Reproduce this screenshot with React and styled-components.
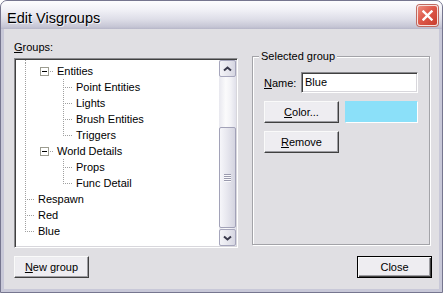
import React from 'react';
import styled, { createGlobalStyle } from 'styled-components';

const GlobalStyle = createGlobalStyle`
  html, body {
    margin: 0;
    padding: 0;
    background: #ffffff;
  }
  body {
    font-family: "Liberation Sans", Arial, sans-serif;
    font-size: 11px;
    color: #000;
  }
`;

const Window = styled.div`
  width: 443px;
  height: 293px;
  box-sizing: border-box;
  border: 1px solid #76768f;
  border-radius: 7px 7px 0 0;
  background: #c8c8d8;
  display: flex;
  flex-direction: column;
  overflow: hidden;
`;

const TitleBar = styled.div`
  height: 28px;
  flex: none;
  display: flex;
  justify-content: space-between;
  padding: 0 4px 0 6px;
  background: linear-gradient(#fdfdfe 0%, #f2f2f7 30%, #dedee8 65%, #c6c6d5 92%, #b6b6c8 100%);
`;

const Title = styled.span`
  font-family: "Liberation Sans", Arial, sans-serif;
  font-size: 14.5px;
  line-height: 16px;
  padding-top: 9px;
  color: #000;
  text-shadow: 1px 1px 0 rgba(255, 255, 255, 0.7);
`;

const CloseBox = styled.div`
  width: 21px;
  height: 21px;
  margin-top: 4px;
  box-sizing: border-box;
  border: 1px solid #f6e2de;
  border-radius: 3px;
  background: linear-gradient(135deg, #ec8e80 0%, #de5a4b 45%, #c83c2d 100%);
  box-shadow: 0 0 0 1px #bf6a60;
  display: flex;
  align-items: center;
  justify-content: center;
`;

const Client = styled.div`
  flex: 1;
  margin: 0 3px 3px;
  background: #e0dfe3;
  padding: 12px 7px 11px 10px;
  display: flex;
  flex-direction: column;
`;

const TopRow = styled.div`
  display: flex;
  align-items: flex-start;
`;

const LeftCol = styled.div`
  width: 224px;
  display: flex;
  flex-direction: column;
`;

const Label = styled.div`
  line-height: 13px;
  margin-bottom: 4px;
`;

const TreeBox = styled.div`
  height: 190px;
  box-sizing: border-box;
  border: 1px solid;
  border-color: #8a8a8e #ffffff #ffffff #8a8a8e;
  box-shadow: inset 1px 1px 0 #404040, inset -1px -1px 0 #d8d7dc;
  padding: 1px;
  display: flex;
  background: #ffffff;
`;

const TreeList = styled.div`
  flex: 1;
  overflow: hidden;
  background: #ffffff;
`;

const Row = styled.div`
  display: flex;
  height: ${(p) => p.$h || 16}px;
  line-height: 16px;
  white-space: nowrap;
`;

const Cell = styled.svg`
  flex: none;
  display: block;
`;

const ItemText = styled.span`
  margin-left: 3px;
`;

const ScrollBar = styled.div`
  width: 17px;
  flex: none;
  display: flex;
  flex-direction: column;
  background: linear-gradient(to right, #e8e8ef, #fbfbfc 40%, #f2f2f6 70%, #e0e0ea);
`;

const ArrowButton = styled.div`
  height: 17px;
  flex: none;
  box-sizing: border-box;
  border: 1px solid #a6a6bc;
  border-radius: 2px;
  background: linear-gradient(to right, #f4f4f8, #e4e4ec 60%, #d6d6e2);
  display: flex;
  align-items: center;
  justify-content: center;
`;

const Track = styled.div`
  flex: 1;
  padding: ${(p) => p.$offset}px 0 1px;
`;

const Thumb = styled.div`
  height: ${(p) => p.$size}px;
  box-sizing: border-box;
  border: 1px solid #a2a2b8;
  border-radius: 2px;
  background: linear-gradient(to right, #f6f6fa, #e6e6ee 50%, #d4d4e0);
  display: flex;
  flex-direction: column;
  align-items: center;
  justify-content: center;
  gap: 1px;
`;

const Grip = styled.div`
  width: 7px;
  height: 1px;
  background: #9a9aae;
  box-shadow: 0 1px 0 #fafafc;
`;

const GroupBox = styled.fieldset`
  margin: 9px 2px 0 14px;
  padding: 0;
  width: 178px;
  height: 195px;
  box-sizing: border-box;
  border: 1px solid #a3a3a8;
  box-shadow: inset 1px 1px 0 #ffffff, 1px 1px 0 #ffffff;
  min-width: 0;
`;

const Legend = styled.legend`
  margin-left: 6px;
  padding: 0 2px;
  line-height: 13px;
  background: #e0dfe3;
`;

const GroupBody = styled.div`
  padding: 9px 10px 0 11px;
  display: flex;
  flex-direction: column;
  gap: 8px;
`;

const FieldRow = styled.div`
  display: flex;
  align-items: center;
  gap: ${(p) => p.$gap || 0}px;
`;

const FieldLabel = styled.span`
  width: 37px;
`;

const TextInput = styled.div`
  width: 117px;
  height: 21px;
  box-sizing: border-box;
  border: 1px solid;
  border-color: #8a8a8e #ffffff #ffffff #8a8a8e;
  box-shadow: inset 1px 1px 0 #404040, inset -1px -1px 0 #d8d7dc;
  background: #fff;
  padding: 0 3px;
  line-height: 19px;
`;

const Button = styled.div`
  width: 75px;
  height: 22px;
  box-sizing: border-box;
  border: 1px solid;
  border-color: ${(p) => (p.$default ? '#000' : '#fafafa #404040 #404040 #fafafa')};
  box-shadow: ${(p) =>
    p.$default
      ? 'inset 1px 1px 0 #fafafa, inset -1px -1px 0 #404040, inset -2px -2px 0 #9d9da2'
      : 'inset -1px -1px 0 #9d9da2, inset 1px 1px 0 #ececef'};
  background: #eeedf1;
  display: flex;
  align-items: center;
  justify-content: center;
  line-height: 13px;
`;

const Swatch = styled.div`
  width: 73px;
  height: 22px;
  box-sizing: border-box;
  background: ${(p) => p.$color};
  border: 1px solid;
  border-color: ${(p) => p.$color} #ffffff #ffffff ${(p) => p.$color};
`;

const BottomRow = styled.div`
  display: flex;
  justify-content: space-between;
  margin-top: 8px;
`;

const DOT = '#a0a0a0';

const Guide = ({ kind }) => (
  <Cell width="19" height="16" viewBox="0 0 19 16" shapeRendering="crispEdges">
    {(kind === 'pipe' || kind === 'tee') && (
      <line x1="9.5" y1="0" x2="9.5" y2="16" stroke={DOT} strokeDasharray="1 1" />
    )}
    {kind === 'elbow' && (
      <line x1="9.5" y1="0" x2="9.5" y2="9" stroke={DOT} strokeDasharray="1 1" />
    )}
    {(kind === 'tee' || kind === 'elbow') && (
      <line x1="11" y1="8.5" x2="18" y2="8.5" stroke={DOT} strokeDasharray="1 1" />
    )}
    {kind === 'box' && (
      <>
        <rect x="5.5" y="4.5" width="8" height="8" fill="#fff" stroke="#9c9c90" />
        <line x1="7" y1="8.5" x2="12" y2="8.5" stroke="#000" />
        <line x1="15" y1="8.5" x2="19" y2="8.5" stroke={DOT} strokeDasharray="1 1" />
      </>
    )}
  </Cell>
);

const rows = [
  { label: 'Entities', guides: ['pipe', 'box'] },
  { label: 'Point Entities', guides: ['pipe', 'blank', 'tee'] },
  { label: 'Lights', guides: ['pipe', 'blank', 'tee'] },
  { label: 'Brush Entities', guides: ['pipe', 'blank', 'tee'] },
  { label: 'Triggers', guides: ['pipe', 'blank', 'elbow'] },
  { label: 'World Details', guides: ['pipe', 'box'] },
  { label: 'Props', guides: ['pipe', 'blank', 'tee'] },
  { label: 'Func Detail', guides: ['pipe', 'blank', 'elbow'] },
  { label: 'Respawn', guides: ['tee'] },
  { label: 'Red', guides: ['tee'] },
  { label: 'Blue', guides: ['elbow'] },
];

const Chevron = ({ down }) => (
  <svg width="9" height="6" viewBox="0 0 9 6">
    <polyline
      points={down ? '1,1.5 4.5,4.5 8,1.5' : '1,4.5 4.5,1.5 8,4.5'}
      fill="none"
      stroke="#3a3a4c"
      strokeWidth="2"
    />
  </svg>
);

const App = () => (
  <>
    <GlobalStyle />
    <Window>
      <TitleBar>
        <Title>Edit Visgroups</Title>
        <CloseBox>
          <svg width="11" height="11" viewBox="0 0 11 11">
            <path d="M1.5 1.5 L9.5 9.5 M9.5 1.5 L1.5 9.5" stroke="#fff" strokeWidth="2.4" strokeLinecap="square" />
          </svg>
        </CloseBox>
      </TitleBar>
      <Client>
        <TopRow>
          <LeftCol>
            <Label><u>G</u>roups:</Label>
            <TreeBox>
              <TreeList>
                <Row $h={3}>
                  <Cell width="19" height="3" viewBox="0 0 19 3" shapeRendering="crispEdges">
                    <line x1="9.5" y1="0" x2="9.5" y2="3" stroke={DOT} strokeDasharray="1 1" />
                  </Cell>
                </Row>
                {rows.map((r) => (
                  <Row key={r.label}>
                    {r.guides.map((g, i) => (
                      <Guide key={i} kind={g} />
                    ))}
                    <ItemText>{r.label}</ItemText>
                  </Row>
                ))}
              </TreeList>
              <ScrollBar>
                <ArrowButton><Chevron /></ArrowButton>
                <Track $offset={50}>
                  <Thumb $size={101}>
                    <Grip /><Grip /><Grip /><Grip />
                  </Thumb>
                </Track>
                <ArrowButton><Chevron down /></ArrowButton>
              </ScrollBar>
            </TreeBox>
          </LeftCol>
          <GroupBox>
            <Legend>Selected group</Legend>
            <GroupBody>
              <FieldRow>
                <FieldLabel><u>N</u>ame:</FieldLabel>
                <TextInput>Blue</TextInput>
              </FieldRow>
              <FieldRow $gap={6}>
                <Button><span><u>C</u>olor...</span></Button>
                <Swatch $color="#8be0f9" />
              </FieldRow>
              <FieldRow>
                <Button><span><u>R</u>emove</span></Button>
              </FieldRow>
            </GroupBody>
          </GroupBox>
        </TopRow>
        <BottomRow>
          <Button><span><u>N</u>ew group</span></Button>
          <Button $default>Close</Button>
        </BottomRow>
      </Client>
    </Window>
  </>
);

export default App;
